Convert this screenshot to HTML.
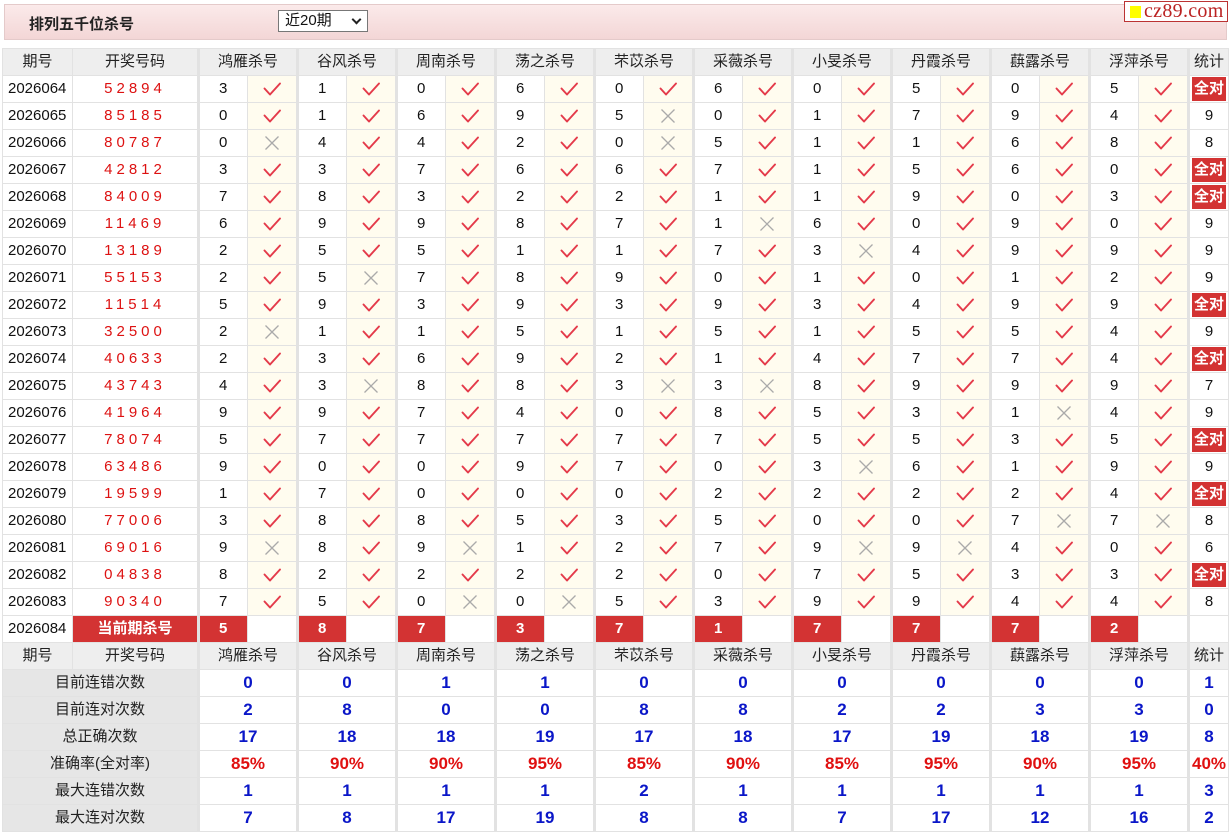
<!DOCTYPE html>
<html><head><meta charset="utf-8"><style>
*{margin:0;padding:0;box-sizing:border-box}
body{width:1229px;height:832px;background:#fff;font-family:"Liberation Sans","Noto Sans CJK SC",sans-serif;position:relative;overflow:hidden}
.bar{position:absolute;left:4px;top:4px;width:1223px;height:36px;background:linear-gradient(#fbeaea,#f3d6d6);border:1px solid #e4caca}
.bar b{position:absolute;left:24px;top:8px;font-size:15px;color:#222}
.sel{position:absolute;left:273px;top:5px;width:90px;height:22px;border:1px solid #777;background:#fff;font-size:15px;padding-left:6px;line-height:20px;color:#111}
.sel i{position:absolute;right:7px;top:5px;width:7px;height:7px;border-right:2px solid #222;border-bottom:2px solid #222;transform:rotate(45deg)}
.logo{position:absolute;left:1124px;top:1px;width:104px;height:21px;border:1px solid #b33;background:#fff;font-family:"Liberation Serif",serif;font-size:20px;color:#b22;line-height:18px;padding-left:19px;letter-spacing:.3px}
.logo:before{content:"";position:absolute;left:5px;top:4px;width:11px;height:12px;background:#ff0}
table{position:absolute;left:2px;top:48px;border-collapse:collapse;table-layout:fixed}
td{height:27px;line-height:20px;border:1px solid #e2e2e2;text-align:center;font-size:15px;color:#111;padding:0;white-space:nowrap}
tr.h td{background:#eeeeee;font-size:15px;color:#222}
td.q{background:#fff;text-align:left;padding-left:5px}
tr.h td.q{text-align:center;padding:0}
td.k{color:#d11;letter-spacing:4px}
td.n{border-left:3px solid #e2e2e2;text-align:left;padding-left:19px}
tr.h td.n,td.v{border-left:3px solid #e2e2e2}
td.i{background:#fffcef}
td.s{border-left:3px solid #e2e2e2}
td.a{padding:0 2px}
td.a span{display:block;background:#d33333;color:#fff;font-weight:bold;font-size:15px;line-height:24px}
tr.c td.k{background:#d33333;color:#fff;font-weight:bold;letter-spacing:0}
tr.c td.n{background:#d33333;color:#fff;font-weight:bold}
tr.c td.i{background:#fff}
td.l{background:#e6e6e6;color:#222}
td.v{color:#0a16c8;font-weight:bold;font-size:17px}
td.p{color:#e01010}
svg{display:block;margin:0 auto}
</style></head><body>
<svg width="0" height="0" style="position:absolute"><defs>
<symbol id="c" viewBox="0 0 20 16"><path d="M2.5 7.5 L8 13.5 L18 2.5" fill="none" stroke="#e43a4a" stroke-width="1.9" stroke-linecap="round" stroke-linejoin="round"/></symbol>
<symbol id="x" viewBox="0 0 20 16"><path d="M3.5 1.5 L16.5 14.5 M16.5 1.5 L3.5 14.5" fill="none" stroke="#aaa" stroke-width="1.3"/></symbol>
</defs></svg>
<div class="bar"><b>排列五千位杀号</b><div class="sel">近20期<i></i></div></div>
<div class="logo">cz89.com</div>
<table>
<colgroup><col style="width:70px"><col style="width:126px">
<col style="width:49px"><col style="width:50px"><col style="width:49px"><col style="width:50px"><col style="width:49px"><col style="width:50px"><col style="width:49px"><col style="width:50px"><col style="width:49px"><col style="width:50px"><col style="width:49px"><col style="width:50px"><col style="width:49px"><col style="width:50px"><col style="width:49px"><col style="width:50px"><col style="width:49px"><col style="width:50px"><col style="width:49px"><col style="width:50px"><col style="width:40px"></colgroup>
<tr class="h"><td class="q">期号</td><td>开奖号码</td><td class="n" colspan="2" style="text-align:center;padding:0">鸿雁杀号</td><td class="n" colspan="2" style="text-align:center;padding:0">谷风杀号</td><td class="n" colspan="2" style="text-align:center;padding:0">周南杀号</td><td class="n" colspan="2" style="text-align:center;padding:0">荡之杀号</td><td class="n" colspan="2" style="text-align:center;padding:0">芣苡杀号</td><td class="n" colspan="2" style="text-align:center;padding:0">采薇杀号</td><td class="n" colspan="2" style="text-align:center;padding:0">小旻杀号</td><td class="n" colspan="2" style="text-align:center;padding:0">丹霞杀号</td><td class="n" colspan="2" style="text-align:center;padding:0">蕻露杀号</td><td class="n" colspan="2" style="text-align:center;padding:0">浮萍杀号</td><td class="s">统计</td></tr>
<tr><td class="q">2026064</td><td class="k">52894</td><td class="n">3</td><td class="i"><svg width="20" height="16"><use href="#c"/></svg></td><td class="n">1</td><td class="i"><svg width="20" height="16"><use href="#c"/></svg></td><td class="n">0</td><td class="i"><svg width="20" height="16"><use href="#c"/></svg></td><td class="n">6</td><td class="i"><svg width="20" height="16"><use href="#c"/></svg></td><td class="n">0</td><td class="i"><svg width="20" height="16"><use href="#c"/></svg></td><td class="n">6</td><td class="i"><svg width="20" height="16"><use href="#c"/></svg></td><td class="n">0</td><td class="i"><svg width="20" height="16"><use href="#c"/></svg></td><td class="n">5</td><td class="i"><svg width="20" height="16"><use href="#c"/></svg></td><td class="n">0</td><td class="i"><svg width="20" height="16"><use href="#c"/></svg></td><td class="n">5</td><td class="i"><svg width="20" height="16"><use href="#c"/></svg></td><td class="s a"><span>全对</span></td></tr>
<tr><td class="q">2026065</td><td class="k">85185</td><td class="n">0</td><td class="i"><svg width="20" height="16"><use href="#c"/></svg></td><td class="n">1</td><td class="i"><svg width="20" height="16"><use href="#c"/></svg></td><td class="n">6</td><td class="i"><svg width="20" height="16"><use href="#c"/></svg></td><td class="n">9</td><td class="i"><svg width="20" height="16"><use href="#c"/></svg></td><td class="n">5</td><td class="i"><svg width="20" height="16"><use href="#x"/></svg></td><td class="n">0</td><td class="i"><svg width="20" height="16"><use href="#c"/></svg></td><td class="n">1</td><td class="i"><svg width="20" height="16"><use href="#c"/></svg></td><td class="n">7</td><td class="i"><svg width="20" height="16"><use href="#c"/></svg></td><td class="n">9</td><td class="i"><svg width="20" height="16"><use href="#c"/></svg></td><td class="n">4</td><td class="i"><svg width="20" height="16"><use href="#c"/></svg></td><td class="s">9</td></tr>
<tr><td class="q">2026066</td><td class="k">80787</td><td class="n">0</td><td class="i"><svg width="20" height="16"><use href="#x"/></svg></td><td class="n">4</td><td class="i"><svg width="20" height="16"><use href="#c"/></svg></td><td class="n">4</td><td class="i"><svg width="20" height="16"><use href="#c"/></svg></td><td class="n">2</td><td class="i"><svg width="20" height="16"><use href="#c"/></svg></td><td class="n">0</td><td class="i"><svg width="20" height="16"><use href="#x"/></svg></td><td class="n">5</td><td class="i"><svg width="20" height="16"><use href="#c"/></svg></td><td class="n">1</td><td class="i"><svg width="20" height="16"><use href="#c"/></svg></td><td class="n">1</td><td class="i"><svg width="20" height="16"><use href="#c"/></svg></td><td class="n">6</td><td class="i"><svg width="20" height="16"><use href="#c"/></svg></td><td class="n">8</td><td class="i"><svg width="20" height="16"><use href="#c"/></svg></td><td class="s">8</td></tr>
<tr><td class="q">2026067</td><td class="k">42812</td><td class="n">3</td><td class="i"><svg width="20" height="16"><use href="#c"/></svg></td><td class="n">3</td><td class="i"><svg width="20" height="16"><use href="#c"/></svg></td><td class="n">7</td><td class="i"><svg width="20" height="16"><use href="#c"/></svg></td><td class="n">6</td><td class="i"><svg width="20" height="16"><use href="#c"/></svg></td><td class="n">6</td><td class="i"><svg width="20" height="16"><use href="#c"/></svg></td><td class="n">7</td><td class="i"><svg width="20" height="16"><use href="#c"/></svg></td><td class="n">1</td><td class="i"><svg width="20" height="16"><use href="#c"/></svg></td><td class="n">5</td><td class="i"><svg width="20" height="16"><use href="#c"/></svg></td><td class="n">6</td><td class="i"><svg width="20" height="16"><use href="#c"/></svg></td><td class="n">0</td><td class="i"><svg width="20" height="16"><use href="#c"/></svg></td><td class="s a"><span>全对</span></td></tr>
<tr><td class="q">2026068</td><td class="k">84009</td><td class="n">7</td><td class="i"><svg width="20" height="16"><use href="#c"/></svg></td><td class="n">8</td><td class="i"><svg width="20" height="16"><use href="#c"/></svg></td><td class="n">3</td><td class="i"><svg width="20" height="16"><use href="#c"/></svg></td><td class="n">2</td><td class="i"><svg width="20" height="16"><use href="#c"/></svg></td><td class="n">2</td><td class="i"><svg width="20" height="16"><use href="#c"/></svg></td><td class="n">1</td><td class="i"><svg width="20" height="16"><use href="#c"/></svg></td><td class="n">1</td><td class="i"><svg width="20" height="16"><use href="#c"/></svg></td><td class="n">9</td><td class="i"><svg width="20" height="16"><use href="#c"/></svg></td><td class="n">0</td><td class="i"><svg width="20" height="16"><use href="#c"/></svg></td><td class="n">3</td><td class="i"><svg width="20" height="16"><use href="#c"/></svg></td><td class="s a"><span>全对</span></td></tr>
<tr><td class="q">2026069</td><td class="k">11469</td><td class="n">6</td><td class="i"><svg width="20" height="16"><use href="#c"/></svg></td><td class="n">9</td><td class="i"><svg width="20" height="16"><use href="#c"/></svg></td><td class="n">9</td><td class="i"><svg width="20" height="16"><use href="#c"/></svg></td><td class="n">8</td><td class="i"><svg width="20" height="16"><use href="#c"/></svg></td><td class="n">7</td><td class="i"><svg width="20" height="16"><use href="#c"/></svg></td><td class="n">1</td><td class="i"><svg width="20" height="16"><use href="#x"/></svg></td><td class="n">6</td><td class="i"><svg width="20" height="16"><use href="#c"/></svg></td><td class="n">0</td><td class="i"><svg width="20" height="16"><use href="#c"/></svg></td><td class="n">9</td><td class="i"><svg width="20" height="16"><use href="#c"/></svg></td><td class="n">0</td><td class="i"><svg width="20" height="16"><use href="#c"/></svg></td><td class="s">9</td></tr>
<tr><td class="q">2026070</td><td class="k">13189</td><td class="n">2</td><td class="i"><svg width="20" height="16"><use href="#c"/></svg></td><td class="n">5</td><td class="i"><svg width="20" height="16"><use href="#c"/></svg></td><td class="n">5</td><td class="i"><svg width="20" height="16"><use href="#c"/></svg></td><td class="n">1</td><td class="i"><svg width="20" height="16"><use href="#c"/></svg></td><td class="n">1</td><td class="i"><svg width="20" height="16"><use href="#c"/></svg></td><td class="n">7</td><td class="i"><svg width="20" height="16"><use href="#c"/></svg></td><td class="n">3</td><td class="i"><svg width="20" height="16"><use href="#x"/></svg></td><td class="n">4</td><td class="i"><svg width="20" height="16"><use href="#c"/></svg></td><td class="n">9</td><td class="i"><svg width="20" height="16"><use href="#c"/></svg></td><td class="n">9</td><td class="i"><svg width="20" height="16"><use href="#c"/></svg></td><td class="s">9</td></tr>
<tr><td class="q">2026071</td><td class="k">55153</td><td class="n">2</td><td class="i"><svg width="20" height="16"><use href="#c"/></svg></td><td class="n">5</td><td class="i"><svg width="20" height="16"><use href="#x"/></svg></td><td class="n">7</td><td class="i"><svg width="20" height="16"><use href="#c"/></svg></td><td class="n">8</td><td class="i"><svg width="20" height="16"><use href="#c"/></svg></td><td class="n">9</td><td class="i"><svg width="20" height="16"><use href="#c"/></svg></td><td class="n">0</td><td class="i"><svg width="20" height="16"><use href="#c"/></svg></td><td class="n">1</td><td class="i"><svg width="20" height="16"><use href="#c"/></svg></td><td class="n">0</td><td class="i"><svg width="20" height="16"><use href="#c"/></svg></td><td class="n">1</td><td class="i"><svg width="20" height="16"><use href="#c"/></svg></td><td class="n">2</td><td class="i"><svg width="20" height="16"><use href="#c"/></svg></td><td class="s">9</td></tr>
<tr><td class="q">2026072</td><td class="k">11514</td><td class="n">5</td><td class="i"><svg width="20" height="16"><use href="#c"/></svg></td><td class="n">9</td><td class="i"><svg width="20" height="16"><use href="#c"/></svg></td><td class="n">3</td><td class="i"><svg width="20" height="16"><use href="#c"/></svg></td><td class="n">9</td><td class="i"><svg width="20" height="16"><use href="#c"/></svg></td><td class="n">3</td><td class="i"><svg width="20" height="16"><use href="#c"/></svg></td><td class="n">9</td><td class="i"><svg width="20" height="16"><use href="#c"/></svg></td><td class="n">3</td><td class="i"><svg width="20" height="16"><use href="#c"/></svg></td><td class="n">4</td><td class="i"><svg width="20" height="16"><use href="#c"/></svg></td><td class="n">9</td><td class="i"><svg width="20" height="16"><use href="#c"/></svg></td><td class="n">9</td><td class="i"><svg width="20" height="16"><use href="#c"/></svg></td><td class="s a"><span>全对</span></td></tr>
<tr><td class="q">2026073</td><td class="k">32500</td><td class="n">2</td><td class="i"><svg width="20" height="16"><use href="#x"/></svg></td><td class="n">1</td><td class="i"><svg width="20" height="16"><use href="#c"/></svg></td><td class="n">1</td><td class="i"><svg width="20" height="16"><use href="#c"/></svg></td><td class="n">5</td><td class="i"><svg width="20" height="16"><use href="#c"/></svg></td><td class="n">1</td><td class="i"><svg width="20" height="16"><use href="#c"/></svg></td><td class="n">5</td><td class="i"><svg width="20" height="16"><use href="#c"/></svg></td><td class="n">1</td><td class="i"><svg width="20" height="16"><use href="#c"/></svg></td><td class="n">5</td><td class="i"><svg width="20" height="16"><use href="#c"/></svg></td><td class="n">5</td><td class="i"><svg width="20" height="16"><use href="#c"/></svg></td><td class="n">4</td><td class="i"><svg width="20" height="16"><use href="#c"/></svg></td><td class="s">9</td></tr>
<tr><td class="q">2026074</td><td class="k">40633</td><td class="n">2</td><td class="i"><svg width="20" height="16"><use href="#c"/></svg></td><td class="n">3</td><td class="i"><svg width="20" height="16"><use href="#c"/></svg></td><td class="n">6</td><td class="i"><svg width="20" height="16"><use href="#c"/></svg></td><td class="n">9</td><td class="i"><svg width="20" height="16"><use href="#c"/></svg></td><td class="n">2</td><td class="i"><svg width="20" height="16"><use href="#c"/></svg></td><td class="n">1</td><td class="i"><svg width="20" height="16"><use href="#c"/></svg></td><td class="n">4</td><td class="i"><svg width="20" height="16"><use href="#c"/></svg></td><td class="n">7</td><td class="i"><svg width="20" height="16"><use href="#c"/></svg></td><td class="n">7</td><td class="i"><svg width="20" height="16"><use href="#c"/></svg></td><td class="n">4</td><td class="i"><svg width="20" height="16"><use href="#c"/></svg></td><td class="s a"><span>全对</span></td></tr>
<tr><td class="q">2026075</td><td class="k">43743</td><td class="n">4</td><td class="i"><svg width="20" height="16"><use href="#c"/></svg></td><td class="n">3</td><td class="i"><svg width="20" height="16"><use href="#x"/></svg></td><td class="n">8</td><td class="i"><svg width="20" height="16"><use href="#c"/></svg></td><td class="n">8</td><td class="i"><svg width="20" height="16"><use href="#c"/></svg></td><td class="n">3</td><td class="i"><svg width="20" height="16"><use href="#x"/></svg></td><td class="n">3</td><td class="i"><svg width="20" height="16"><use href="#x"/></svg></td><td class="n">8</td><td class="i"><svg width="20" height="16"><use href="#c"/></svg></td><td class="n">9</td><td class="i"><svg width="20" height="16"><use href="#c"/></svg></td><td class="n">9</td><td class="i"><svg width="20" height="16"><use href="#c"/></svg></td><td class="n">9</td><td class="i"><svg width="20" height="16"><use href="#c"/></svg></td><td class="s">7</td></tr>
<tr><td class="q">2026076</td><td class="k">41964</td><td class="n">9</td><td class="i"><svg width="20" height="16"><use href="#c"/></svg></td><td class="n">9</td><td class="i"><svg width="20" height="16"><use href="#c"/></svg></td><td class="n">7</td><td class="i"><svg width="20" height="16"><use href="#c"/></svg></td><td class="n">4</td><td class="i"><svg width="20" height="16"><use href="#c"/></svg></td><td class="n">0</td><td class="i"><svg width="20" height="16"><use href="#c"/></svg></td><td class="n">8</td><td class="i"><svg width="20" height="16"><use href="#c"/></svg></td><td class="n">5</td><td class="i"><svg width="20" height="16"><use href="#c"/></svg></td><td class="n">3</td><td class="i"><svg width="20" height="16"><use href="#c"/></svg></td><td class="n">1</td><td class="i"><svg width="20" height="16"><use href="#x"/></svg></td><td class="n">4</td><td class="i"><svg width="20" height="16"><use href="#c"/></svg></td><td class="s">9</td></tr>
<tr><td class="q">2026077</td><td class="k">78074</td><td class="n">5</td><td class="i"><svg width="20" height="16"><use href="#c"/></svg></td><td class="n">7</td><td class="i"><svg width="20" height="16"><use href="#c"/></svg></td><td class="n">7</td><td class="i"><svg width="20" height="16"><use href="#c"/></svg></td><td class="n">7</td><td class="i"><svg width="20" height="16"><use href="#c"/></svg></td><td class="n">7</td><td class="i"><svg width="20" height="16"><use href="#c"/></svg></td><td class="n">7</td><td class="i"><svg width="20" height="16"><use href="#c"/></svg></td><td class="n">5</td><td class="i"><svg width="20" height="16"><use href="#c"/></svg></td><td class="n">5</td><td class="i"><svg width="20" height="16"><use href="#c"/></svg></td><td class="n">3</td><td class="i"><svg width="20" height="16"><use href="#c"/></svg></td><td class="n">5</td><td class="i"><svg width="20" height="16"><use href="#c"/></svg></td><td class="s a"><span>全对</span></td></tr>
<tr><td class="q">2026078</td><td class="k">63486</td><td class="n">9</td><td class="i"><svg width="20" height="16"><use href="#c"/></svg></td><td class="n">0</td><td class="i"><svg width="20" height="16"><use href="#c"/></svg></td><td class="n">0</td><td class="i"><svg width="20" height="16"><use href="#c"/></svg></td><td class="n">9</td><td class="i"><svg width="20" height="16"><use href="#c"/></svg></td><td class="n">7</td><td class="i"><svg width="20" height="16"><use href="#c"/></svg></td><td class="n">0</td><td class="i"><svg width="20" height="16"><use href="#c"/></svg></td><td class="n">3</td><td class="i"><svg width="20" height="16"><use href="#x"/></svg></td><td class="n">6</td><td class="i"><svg width="20" height="16"><use href="#c"/></svg></td><td class="n">1</td><td class="i"><svg width="20" height="16"><use href="#c"/></svg></td><td class="n">9</td><td class="i"><svg width="20" height="16"><use href="#c"/></svg></td><td class="s">9</td></tr>
<tr><td class="q">2026079</td><td class="k">19599</td><td class="n">1</td><td class="i"><svg width="20" height="16"><use href="#c"/></svg></td><td class="n">7</td><td class="i"><svg width="20" height="16"><use href="#c"/></svg></td><td class="n">0</td><td class="i"><svg width="20" height="16"><use href="#c"/></svg></td><td class="n">0</td><td class="i"><svg width="20" height="16"><use href="#c"/></svg></td><td class="n">0</td><td class="i"><svg width="20" height="16"><use href="#c"/></svg></td><td class="n">2</td><td class="i"><svg width="20" height="16"><use href="#c"/></svg></td><td class="n">2</td><td class="i"><svg width="20" height="16"><use href="#c"/></svg></td><td class="n">2</td><td class="i"><svg width="20" height="16"><use href="#c"/></svg></td><td class="n">2</td><td class="i"><svg width="20" height="16"><use href="#c"/></svg></td><td class="n">4</td><td class="i"><svg width="20" height="16"><use href="#c"/></svg></td><td class="s a"><span>全对</span></td></tr>
<tr><td class="q">2026080</td><td class="k">77006</td><td class="n">3</td><td class="i"><svg width="20" height="16"><use href="#c"/></svg></td><td class="n">8</td><td class="i"><svg width="20" height="16"><use href="#c"/></svg></td><td class="n">8</td><td class="i"><svg width="20" height="16"><use href="#c"/></svg></td><td class="n">5</td><td class="i"><svg width="20" height="16"><use href="#c"/></svg></td><td class="n">3</td><td class="i"><svg width="20" height="16"><use href="#c"/></svg></td><td class="n">5</td><td class="i"><svg width="20" height="16"><use href="#c"/></svg></td><td class="n">0</td><td class="i"><svg width="20" height="16"><use href="#c"/></svg></td><td class="n">0</td><td class="i"><svg width="20" height="16"><use href="#c"/></svg></td><td class="n">7</td><td class="i"><svg width="20" height="16"><use href="#x"/></svg></td><td class="n">7</td><td class="i"><svg width="20" height="16"><use href="#x"/></svg></td><td class="s">8</td></tr>
<tr><td class="q">2026081</td><td class="k">69016</td><td class="n">9</td><td class="i"><svg width="20" height="16"><use href="#x"/></svg></td><td class="n">8</td><td class="i"><svg width="20" height="16"><use href="#c"/></svg></td><td class="n">9</td><td class="i"><svg width="20" height="16"><use href="#x"/></svg></td><td class="n">1</td><td class="i"><svg width="20" height="16"><use href="#c"/></svg></td><td class="n">2</td><td class="i"><svg width="20" height="16"><use href="#c"/></svg></td><td class="n">7</td><td class="i"><svg width="20" height="16"><use href="#c"/></svg></td><td class="n">9</td><td class="i"><svg width="20" height="16"><use href="#x"/></svg></td><td class="n">9</td><td class="i"><svg width="20" height="16"><use href="#x"/></svg></td><td class="n">4</td><td class="i"><svg width="20" height="16"><use href="#c"/></svg></td><td class="n">0</td><td class="i"><svg width="20" height="16"><use href="#c"/></svg></td><td class="s">6</td></tr>
<tr><td class="q">2026082</td><td class="k">04838</td><td class="n">8</td><td class="i"><svg width="20" height="16"><use href="#c"/></svg></td><td class="n">2</td><td class="i"><svg width="20" height="16"><use href="#c"/></svg></td><td class="n">2</td><td class="i"><svg width="20" height="16"><use href="#c"/></svg></td><td class="n">2</td><td class="i"><svg width="20" height="16"><use href="#c"/></svg></td><td class="n">2</td><td class="i"><svg width="20" height="16"><use href="#c"/></svg></td><td class="n">0</td><td class="i"><svg width="20" height="16"><use href="#c"/></svg></td><td class="n">7</td><td class="i"><svg width="20" height="16"><use href="#c"/></svg></td><td class="n">5</td><td class="i"><svg width="20" height="16"><use href="#c"/></svg></td><td class="n">3</td><td class="i"><svg width="20" height="16"><use href="#c"/></svg></td><td class="n">3</td><td class="i"><svg width="20" height="16"><use href="#c"/></svg></td><td class="s a"><span>全对</span></td></tr>
<tr><td class="q">2026083</td><td class="k">90340</td><td class="n">7</td><td class="i"><svg width="20" height="16"><use href="#c"/></svg></td><td class="n">5</td><td class="i"><svg width="20" height="16"><use href="#c"/></svg></td><td class="n">0</td><td class="i"><svg width="20" height="16"><use href="#x"/></svg></td><td class="n">0</td><td class="i"><svg width="20" height="16"><use href="#x"/></svg></td><td class="n">5</td><td class="i"><svg width="20" height="16"><use href="#c"/></svg></td><td class="n">3</td><td class="i"><svg width="20" height="16"><use href="#c"/></svg></td><td class="n">9</td><td class="i"><svg width="20" height="16"><use href="#c"/></svg></td><td class="n">9</td><td class="i"><svg width="20" height="16"><use href="#c"/></svg></td><td class="n">4</td><td class="i"><svg width="20" height="16"><use href="#c"/></svg></td><td class="n">4</td><td class="i"><svg width="20" height="16"><use href="#c"/></svg></td><td class="s">8</td></tr>
<tr class="c"><td class="q">2026084</td><td class="k">当前期杀号</td><td class="n">5</td><td class="i"></td><td class="n">8</td><td class="i"></td><td class="n">7</td><td class="i"></td><td class="n">3</td><td class="i"></td><td class="n">7</td><td class="i"></td><td class="n">1</td><td class="i"></td><td class="n">7</td><td class="i"></td><td class="n">7</td><td class="i"></td><td class="n">7</td><td class="i"></td><td class="n">2</td><td class="i"></td><td class="s"></td></tr>
<tr class="h"><td class="q">期号</td><td>开奖号码</td><td class="n" colspan="2" style="text-align:center;padding:0">鸿雁杀号</td><td class="n" colspan="2" style="text-align:center;padding:0">谷风杀号</td><td class="n" colspan="2" style="text-align:center;padding:0">周南杀号</td><td class="n" colspan="2" style="text-align:center;padding:0">荡之杀号</td><td class="n" colspan="2" style="text-align:center;padding:0">芣苡杀号</td><td class="n" colspan="2" style="text-align:center;padding:0">采薇杀号</td><td class="n" colspan="2" style="text-align:center;padding:0">小旻杀号</td><td class="n" colspan="2" style="text-align:center;padding:0">丹霞杀号</td><td class="n" colspan="2" style="text-align:center;padding:0">蕻露杀号</td><td class="n" colspan="2" style="text-align:center;padding:0">浮萍杀号</td><td class="s">统计</td></tr>
<tr><td class="l" colspan="2">目前连错次数</td><td class="v" colspan="2">0</td><td class="v" colspan="2">0</td><td class="v" colspan="2">1</td><td class="v" colspan="2">1</td><td class="v" colspan="2">0</td><td class="v" colspan="2">0</td><td class="v" colspan="2">0</td><td class="v" colspan="2">0</td><td class="v" colspan="2">0</td><td class="v" colspan="2">0</td><td class="v">1</td></tr>
<tr><td class="l" colspan="2">目前连对次数</td><td class="v" colspan="2">2</td><td class="v" colspan="2">8</td><td class="v" colspan="2">0</td><td class="v" colspan="2">0</td><td class="v" colspan="2">8</td><td class="v" colspan="2">8</td><td class="v" colspan="2">2</td><td class="v" colspan="2">2</td><td class="v" colspan="2">3</td><td class="v" colspan="2">3</td><td class="v">0</td></tr>
<tr><td class="l" colspan="2">总正确次数</td><td class="v" colspan="2">17</td><td class="v" colspan="2">18</td><td class="v" colspan="2">18</td><td class="v" colspan="2">19</td><td class="v" colspan="2">17</td><td class="v" colspan="2">18</td><td class="v" colspan="2">17</td><td class="v" colspan="2">19</td><td class="v" colspan="2">18</td><td class="v" colspan="2">19</td><td class="v">8</td></tr>
<tr><td class="l" colspan="2">准确率(全对率)</td><td class="v p" colspan="2">85%</td><td class="v p" colspan="2">90%</td><td class="v p" colspan="2">90%</td><td class="v p" colspan="2">95%</td><td class="v p" colspan="2">85%</td><td class="v p" colspan="2">90%</td><td class="v p" colspan="2">85%</td><td class="v p" colspan="2">95%</td><td class="v p" colspan="2">90%</td><td class="v p" colspan="2">95%</td><td class="v p">40%</td></tr>
<tr><td class="l" colspan="2">最大连错次数</td><td class="v" colspan="2">1</td><td class="v" colspan="2">1</td><td class="v" colspan="2">1</td><td class="v" colspan="2">1</td><td class="v" colspan="2">2</td><td class="v" colspan="2">1</td><td class="v" colspan="2">1</td><td class="v" colspan="2">1</td><td class="v" colspan="2">1</td><td class="v" colspan="2">1</td><td class="v">3</td></tr>
<tr><td class="l" colspan="2">最大连对次数</td><td class="v" colspan="2">7</td><td class="v" colspan="2">8</td><td class="v" colspan="2">17</td><td class="v" colspan="2">19</td><td class="v" colspan="2">8</td><td class="v" colspan="2">8</td><td class="v" colspan="2">7</td><td class="v" colspan="2">17</td><td class="v" colspan="2">12</td><td class="v" colspan="2">16</td><td class="v">2</td></tr>
</table>
</body></html>
